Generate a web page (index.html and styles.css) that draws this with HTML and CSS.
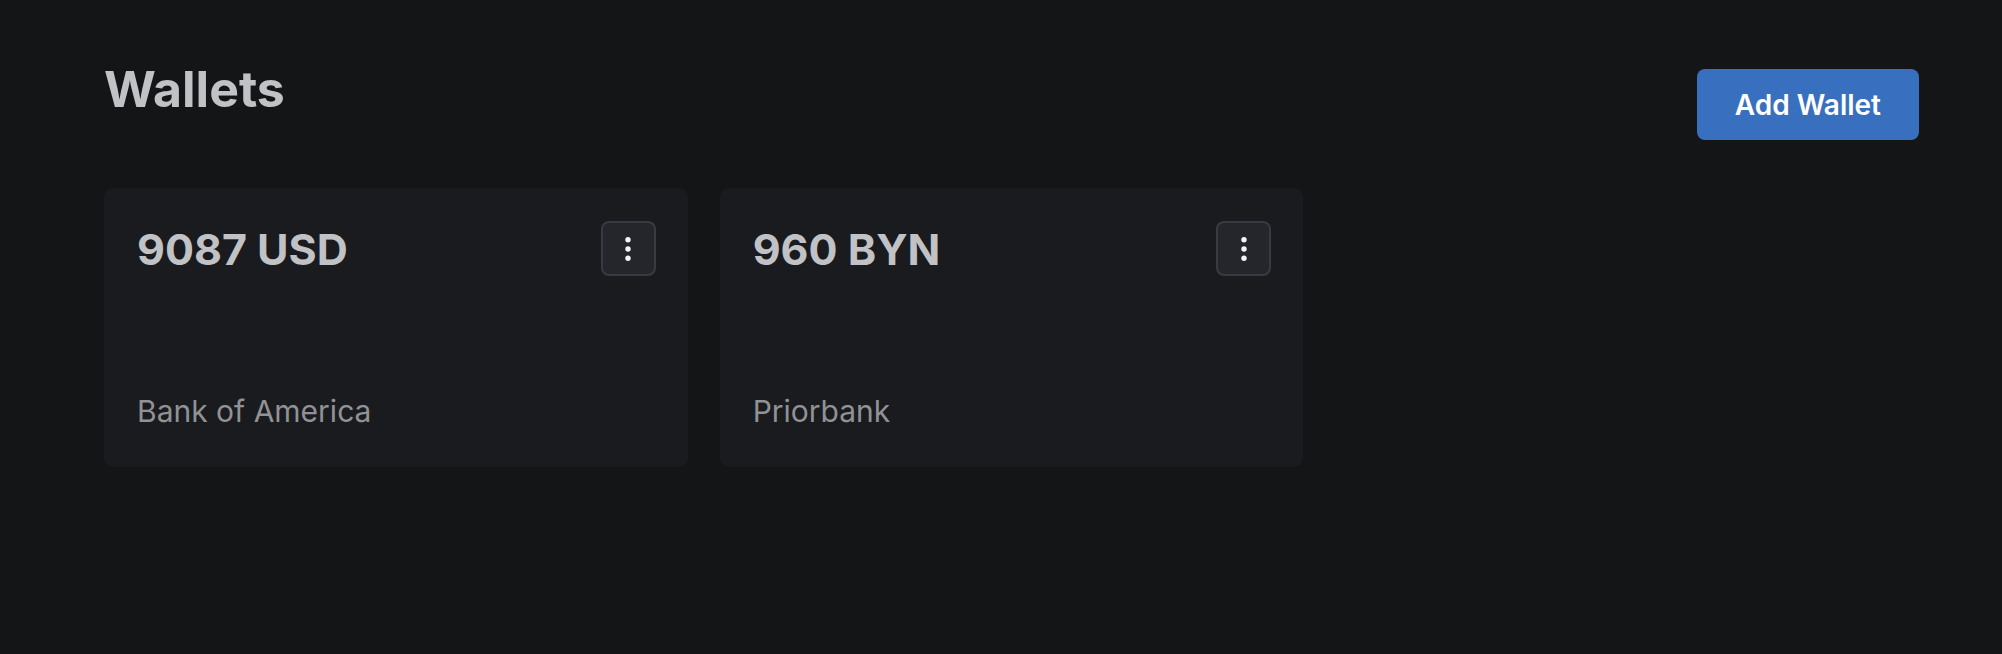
FILE: index.html
```html
<!DOCTYPE html>
<html lang="en">
<head>
<meta charset="utf-8">
<title>Wallets</title>
<link rel="stylesheet" href="styles.css">
</head>
<body>
<main class="page">
  <header class="page-header">
    <h1 class="title">Wallets</h1>
    <button class="btn-primary" type="button">Add Wallet</button>
  </header>
  <section class="wallet-grid">
    <article class="wallet-card">
      <div class="wallet-top">
        <div class="wallet-amount">9087 USD</div>
        <button class="menu-btn" type="button" aria-label="Menu">
          <svg width="8" height="26" viewBox="0 0 8 26"><circle cx="4" cy="3.7" r="2.7" fill="#f4f4f5"/><circle cx="4" cy="13" r="2.7" fill="#f4f4f5"/><circle cx="4" cy="22.3" r="2.7" fill="#f4f4f5"/></svg>
        </button>
      </div>
      <div class="wallet-bank">Bank of America</div>
    </article>
    <article class="wallet-card">
      <div class="wallet-top">
        <div class="wallet-amount">960 BYN</div>
        <button class="menu-btn" type="button" aria-label="Menu">
          <svg width="8" height="26" viewBox="0 0 8 26"><circle cx="4" cy="3.7" r="2.7" fill="#f4f4f5"/><circle cx="4" cy="13" r="2.7" fill="#f4f4f5"/><circle cx="4" cy="22.3" r="2.7" fill="#f4f4f5"/></svg>
        </button>
      </div>
      <div class="wallet-bank">Priorbank</div>
    </article>
  </section>
</main>
</body>
</html>
```

FILE: styles.css
```css
* { box-sizing: border-box; }

html, body {
  margin: 0;
  padding: 0;
  background: #141517;
  height: 100%;
}

body {
  font-family: Inter, "Noto Sans", "Liberation Sans", sans-serif;
  color: #c1c2c5;
}

.page {
  padding: 59px 83px 0 104px;
}

.page-header {
  display: flex;
  justify-content: space-between;
  align-items: flex-start;
}

.title {
  margin: 0;
  font-size: 50px;
  line-height: 60px;
  font-weight: 700;
  color: #c1c2c5;
  letter-spacing: 0;
}

.btn-primary {
  margin-top: 10px;
  height: 71px;
  padding: 0 38px;
  border: 0;
  border-radius: 8px;
  background: #3870bf;
  color: #ffffff;
  font-family: Inter, "Noto Sans", sans-serif;
  font-size: 28px;
  font-weight: 600;
}

.wallet-grid {
  margin-top: 48px;
  display: grid;
  grid-template-columns: repeat(3, 1fr);
  gap: 32px;
}

.wallet-card {
  height: 279px;
  background: #1a1b1e;
  border-radius: 9px;
  padding: 33px 32px 33px 33px;
  display: flex;
  flex-direction: column;
  justify-content: space-between;
}

.wallet-top {
  display: flex;
  justify-content: space-between;
  align-items: center;
}

.wallet-amount {
  font-size: 43px;
  font-weight: 700;
  line-height: 52px;
  color: #c1c2c5;
}

.menu-btn {
  width: 55px;
  height: 55px;
  padding: 0;
  display: flex;
  align-items: center;
  justify-content: center;
  background: #25262b;
  border: 2px solid #373a40;
  border-radius: 8px;
}

.wallet-bank {
  font-size: 30px;
  line-height: 46px;
  font-weight: 400;
  color: #909296;
}
```
